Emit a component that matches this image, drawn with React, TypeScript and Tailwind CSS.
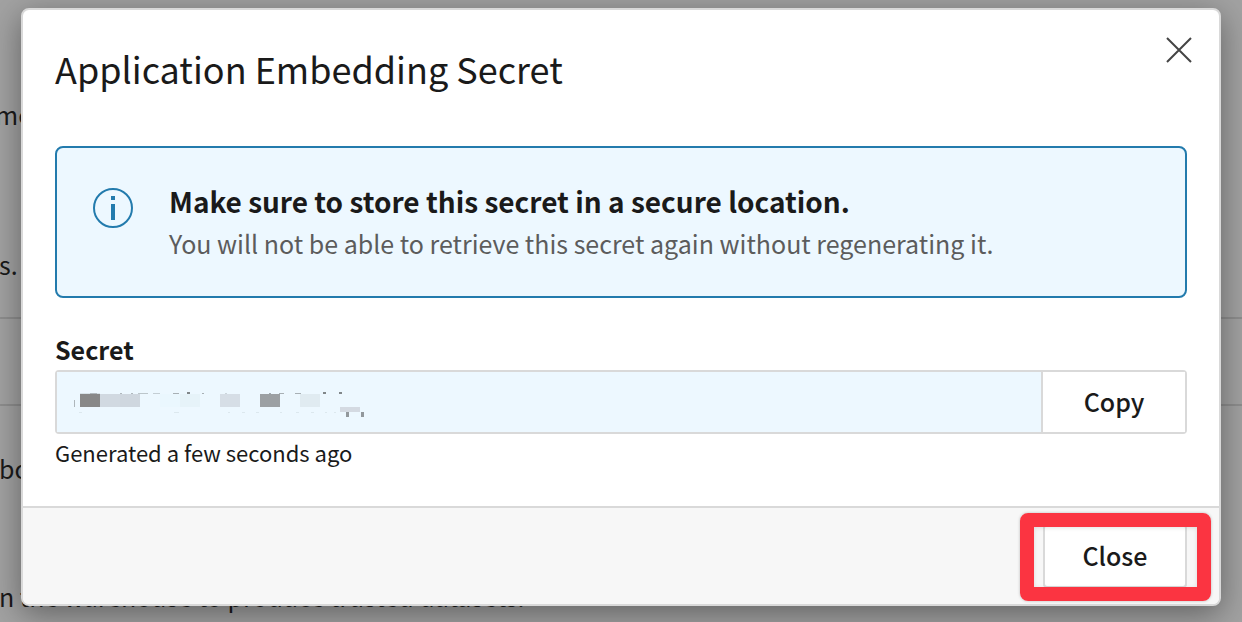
import type { ReactNode } from "react";

type Block = [x: number, y: number, width: number, height: number, fill: string];

const mosaic: Block[] = [
  [80, 394, 20, 13, "#888888"],
  [100, 394, 20, 13, "#d1d9e1"],
  [120, 394, 20, 13, "#cfd7df"],
  [160, 394, 20, 13, "#eaf7fe"],
  [180, 394, 20, 13, "#e6f3f9"],
  [220, 394, 20, 13, "#d6dee6"],
  [260, 394, 20, 13, "#9ca0a3"],
  [300, 394, 20, 13, "#e0ebf1"],
  [340, 407, 20, 5, "#d4dae2"],
  [74, 400, 1, 7, "#aeb6bb"],
  [80, 393, 20, 1, "#d8e3e9"],
  [90, 393, 7, 1, "#b0b8bd"],
  [120, 393, 2, 1, "#b0b8bd"],
  [131, 393, 2, 1, "#b0b8bd"],
  [138, 393, 10, 1, "#bcc6cb"],
  [153, 393, 7, 1, "#c4ced4"],
  [173, 393, 6, 1, "#a8b0b5"],
  [187, 392, 3, 2, "#81878a"],
  [202, 393, 2, 1, "#a8b0b5"],
  [225, 393, 2, 1, "#cbd5db"],
  [269, 393, 2, 1, "#a0a8ad"],
  [279, 393, 5, 1, "#a8b0b5"],
  [295, 393, 6, 1, "#a8b0b5"],
  [323, 392, 3, 2, "#81878a"],
  [339, 392, 3, 2, "#81878a"],
  [79, 412, 3, 1, "#dce8ee"],
  [174, 412, 5, 1, "#dce8ee"],
  [228, 412, 2, 1, "#dce8ee"],
  [242, 412, 3, 1, "#dce8ee"],
  [256, 412, 3, 1, "#dce8ee"],
  [280, 412, 2, 1, "#dce8ee"],
  [296, 412, 3, 1, "#dce8ee"],
  [311, 412, 3, 1, "#dce8ee"],
  [325, 412, 2, 1, "#dce8ee"],
  [334, 412, 2, 1, "#dce8ee"],
  [346, 412, 3, 5, "#92989c"],
  [361, 412, 3, 5, "#92989c"],
];

function RedactedSecret() {
  return (
    <svg
      className="pointer-events-none absolute left-4 top-4"
      width="296"
      height="32"
      viewBox="73 388 296 32"
      shapeRendering="crispEdges"
      aria-hidden="true"
    >
      {mosaic.map(([x, y, width, height, fill]) => (
        <rect key={`${x}-${y}`} x={x} y={y} width={width} height={height} fill={fill} />
      ))}
    </svg>
  );
}

function InfoIcon() {
  return (
    <svg className="mt-2 shrink-0" width="40" height="40" viewBox="0 0 40 40" aria-hidden="true">
      <circle cx="20" cy="20" r="19" fill="none" stroke="#237bad" strokeWidth="2" />
      <path d="M18 8h4v4h-4zM18 16h4v16h-4z" fill="#237bad" />
    </svg>
  );
}

function PageLine({ children }: { children: ReactNode }) {
  return <p className="-ml-px whitespace-nowrap leading-9">{children}</p>;
}

function PageBehind() {
  return (
    <main aria-hidden="true" className="flex min-h-screen flex-col bg-[#a2a2a2] pt-24 text-[25px] text-[#1a1a1a]">
      <div className="-ml-1">
        <PageLine>me</PageLine>
      </div>
      <div className="mt-[114px]">
        <PageLine>s.</PageLine>
      </div>
      <div className="mt-[35px] h-[89px] border-y-2 border-[#8e8e8e]" />
      <div className="mt-11">
        <PageLine>bo</PageLine>
      </div>
      <div className="mt-[92px]">
        <PageLine>n the warehouse to produce trusted datasets.</PageLine>
      </div>
    </main>
  );
}

export default function App() {
  return (
    <div className="relative h-screen overflow-hidden font-['Noto_Sans_CJK_JP','Noto_Sans_CJK_SC',sans-serif]">
      <PageBehind />
      <section
        role="dialog"
        aria-modal="true"
        aria-labelledby="dialog-title"
        className="absolute inset-x-[21px] top-2 overflow-hidden rounded-lg border-2 border-[#d9d9d9] bg-white text-[#1a1a1a] shadow-[0_8px_32px_rgba(0,0,0,0.4)]"
      >
        <header className="flex items-start justify-between pl-8 pr-6 pt-6">
          <h1 id="dialog-title" className="mt-[10px] text-4xl leading-[48px]">
            Application Embedding Secret
          </h1>
          <button type="button" aria-label="Close dialog" className="flex size-8 items-center justify-center">
            <svg width="26" height="26" viewBox="0 0 26 26" fill="none" stroke="#444444" strokeWidth="2" aria-hidden="true">
              <path d="M1 1l24 24M25 1L1 25" />
            </svg>
          </button>
        </header>

        <div className="px-8 pt-[54px]">
          <div className="flex gap-9 rounded-lg border-2 border-[#237bad] bg-[#edf8ff] px-9 py-8">
            <InfoIcon />
            <div className="leading-[42px]">
              <h2 className="text-[28px] font-bold">Make sure to store this secret in a secure location.</h2>
              <p className="text-[25px] text-[#5c5c5c]">
                You will not be able to retrieve this secret again without regenerating it.
              </p>
            </div>
          </div>

          <label htmlFor="secret" className="mt-[33px] block text-[25px] font-bold leading-9">
            Secret
          </label>
          <div className="mt-[3px] flex h-16 rounded border-2 border-[#d9d9d9]">
            <div className="relative flex-1">
              <input id="secret" type="text" readOnly className="size-full bg-[#edf8ff] px-4 outline-none" />
              <RedactedSecret />
            </div>
            <button type="button" className="w-36 border-l-2 border-[#d9d9d9] bg-white text-[25px] font-medium">
              Copy
            </button>
          </div>
          <p className="mt-[2px] text-[22px] leading-8">Generated a few seconds ago</p>
        </div>

        <footer className="mt-[38px] flex justify-end border-t-2 border-[#d9d9d9] bg-[#f7f7f7] px-8 py-4">
          <div className="relative">
            <button
              type="button"
              className="h-16 w-36 rounded border-2 border-[#d9d9d9] bg-white text-[25px] font-medium"
            >
              Close
            </button>
            <span
              aria-hidden="true"
              className="pointer-events-none absolute -bottom-[13px] -left-[23px] -right-6 -top-[11px] rounded-lg border-14 border-[#fb3441] shadow-[0_0_3px_rgba(0,0,0,0.25),inset_0_1px_4px_rgba(0,0,0,0.12)]"
            />
          </div>
        </footer>
      </section>
    </div>
  );
}
